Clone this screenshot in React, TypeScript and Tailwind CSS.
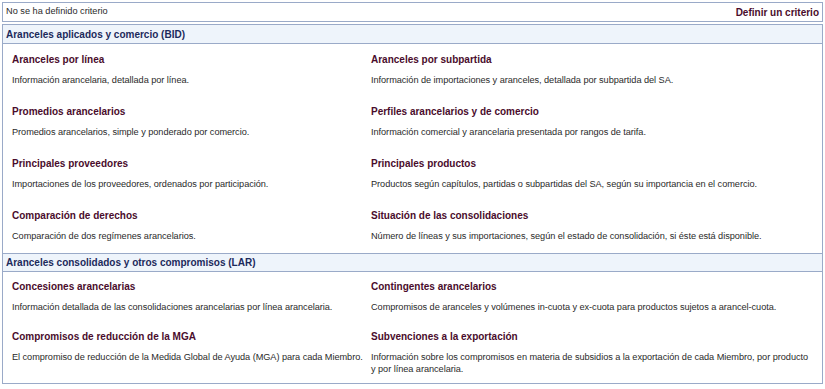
import React from 'react';

type Item = { title: string; desc: string };

const applied: Item[][] = [
  [
    { title: 'Aranceles por línea', desc: 'Información arancelaria, detallada por línea.' },
    { title: 'Aranceles por subpartida', desc: 'Información de importaciones y aranceles, detallada por subpartida del SA.' },
  ],
  [
    { title: 'Promedios arancelarios', desc: 'Promedios arancelarios, simple y ponderado por comercio.' },
    { title: 'Perfiles arancelarios y de comercio', desc: 'Información comercial y arancelaria presentada por rangos de tarifa.' },
  ],
  [
    { title: 'Principales proveedores', desc: 'Importaciones de los proveedores, ordenados por participación.' },
    { title: 'Principales productos', desc: 'Productos según capítulos, partidas o subpartidas del SA, según su importancia en el comercio.' },
  ],
  [
    { title: 'Comparación de derechos', desc: 'Comparación de dos regímenes arancelarios.' },
    { title: 'Situación de las consolidaciones', desc: 'Número de líneas y sus importaciones, según el estado de consolidación, si éste está disponible.' },
  ],
];

const bound: Item[][] = [
  [
    { title: 'Concesiones arancelarias', desc: 'Información detallada de las consolidaciones arancelarias por línea arancelaria.' },
    { title: 'Contingentes arancelarios', desc: 'Compromisos de aranceles y volúmenes in-cuota y ex-cuota para productos sujetos a arancel-cuota.' },
  ],
  [
    { title: 'Compromisos de reducción de la MGA', desc: 'El compromiso de reducción de la Medida Global de Ayuda (MGA) para cada Miembro.' },
    { title: 'Subvenciones a la exportación', desc: 'Información sobre los compromisos en materia de subsidios a la exportación de cada Miembro, por producto y por línea arancelaria.' },
  ],
];

const Entry = ({ item, left }: { item: Item; left?: boolean }) => (
  <div className={left ? 'whitespace-nowrap' : 'pr-[9px]'}>
    <div className="text-[10px] leading-[14px] font-bold text-[#4a0c2c]">{item.title}</div>
    <div className="mt-[7px] text-[9.2px] leading-[12px] text-[#2a2a2a] tracking-[-0.05px]">{item.desc}</div>
  </div>
);

const Section = ({ title, rows, first }: { title: string; rows: Item[][]; first?: boolean }) => (
  <div>
    <div
      className={`h-[19px] flex items-center px-[3px] bg-[#eef4fb] border-b border-[#9aaac8] text-[10px] font-bold text-[#1c2a5c] ${first ? '' : 'border-t'}`}
    >
      {title}
    </div>
    <div className={`flex flex-col pl-[9px] ${first ? 'gap-[19px] pt-[9px] pb-[11px]' : 'gap-[17px] pt-[8px] pb-[8px]'}`}>
      {rows.map((row, i) => (
        <div key={i} className="grid grid-cols-[359px_1fr]">
          <Entry item={row[0]} left />
          <Entry item={row[1]} />
        </div>
      ))}
    </div>
  </div>
);

export default function App() {
  return (
    <div className="w-[825px] h-[389px] bg-white px-[2px] pt-[2px] font-['Liberation_Sans',Arial,sans-serif]">
      <div className="h-[20px] flex items-center justify-between px-[3px] border border-[#9aaac8]">
        <span className="text-[9.2px] text-[#2a2a2a]">No se ha definido criterio</span>
        <span className="text-[10px] font-bold text-[#4a0c2c]">Definir un criterio</span>
      </div>
      <div className="mt-[2px] border border-[#9aaac8]">
        <Section title="Aranceles aplicados y comercio (BID)" rows={applied} first />
        <Section title="Aranceles consolidados y otros compromisos (LAR)" rows={bound} />
      </div>
    </div>
  );
}
